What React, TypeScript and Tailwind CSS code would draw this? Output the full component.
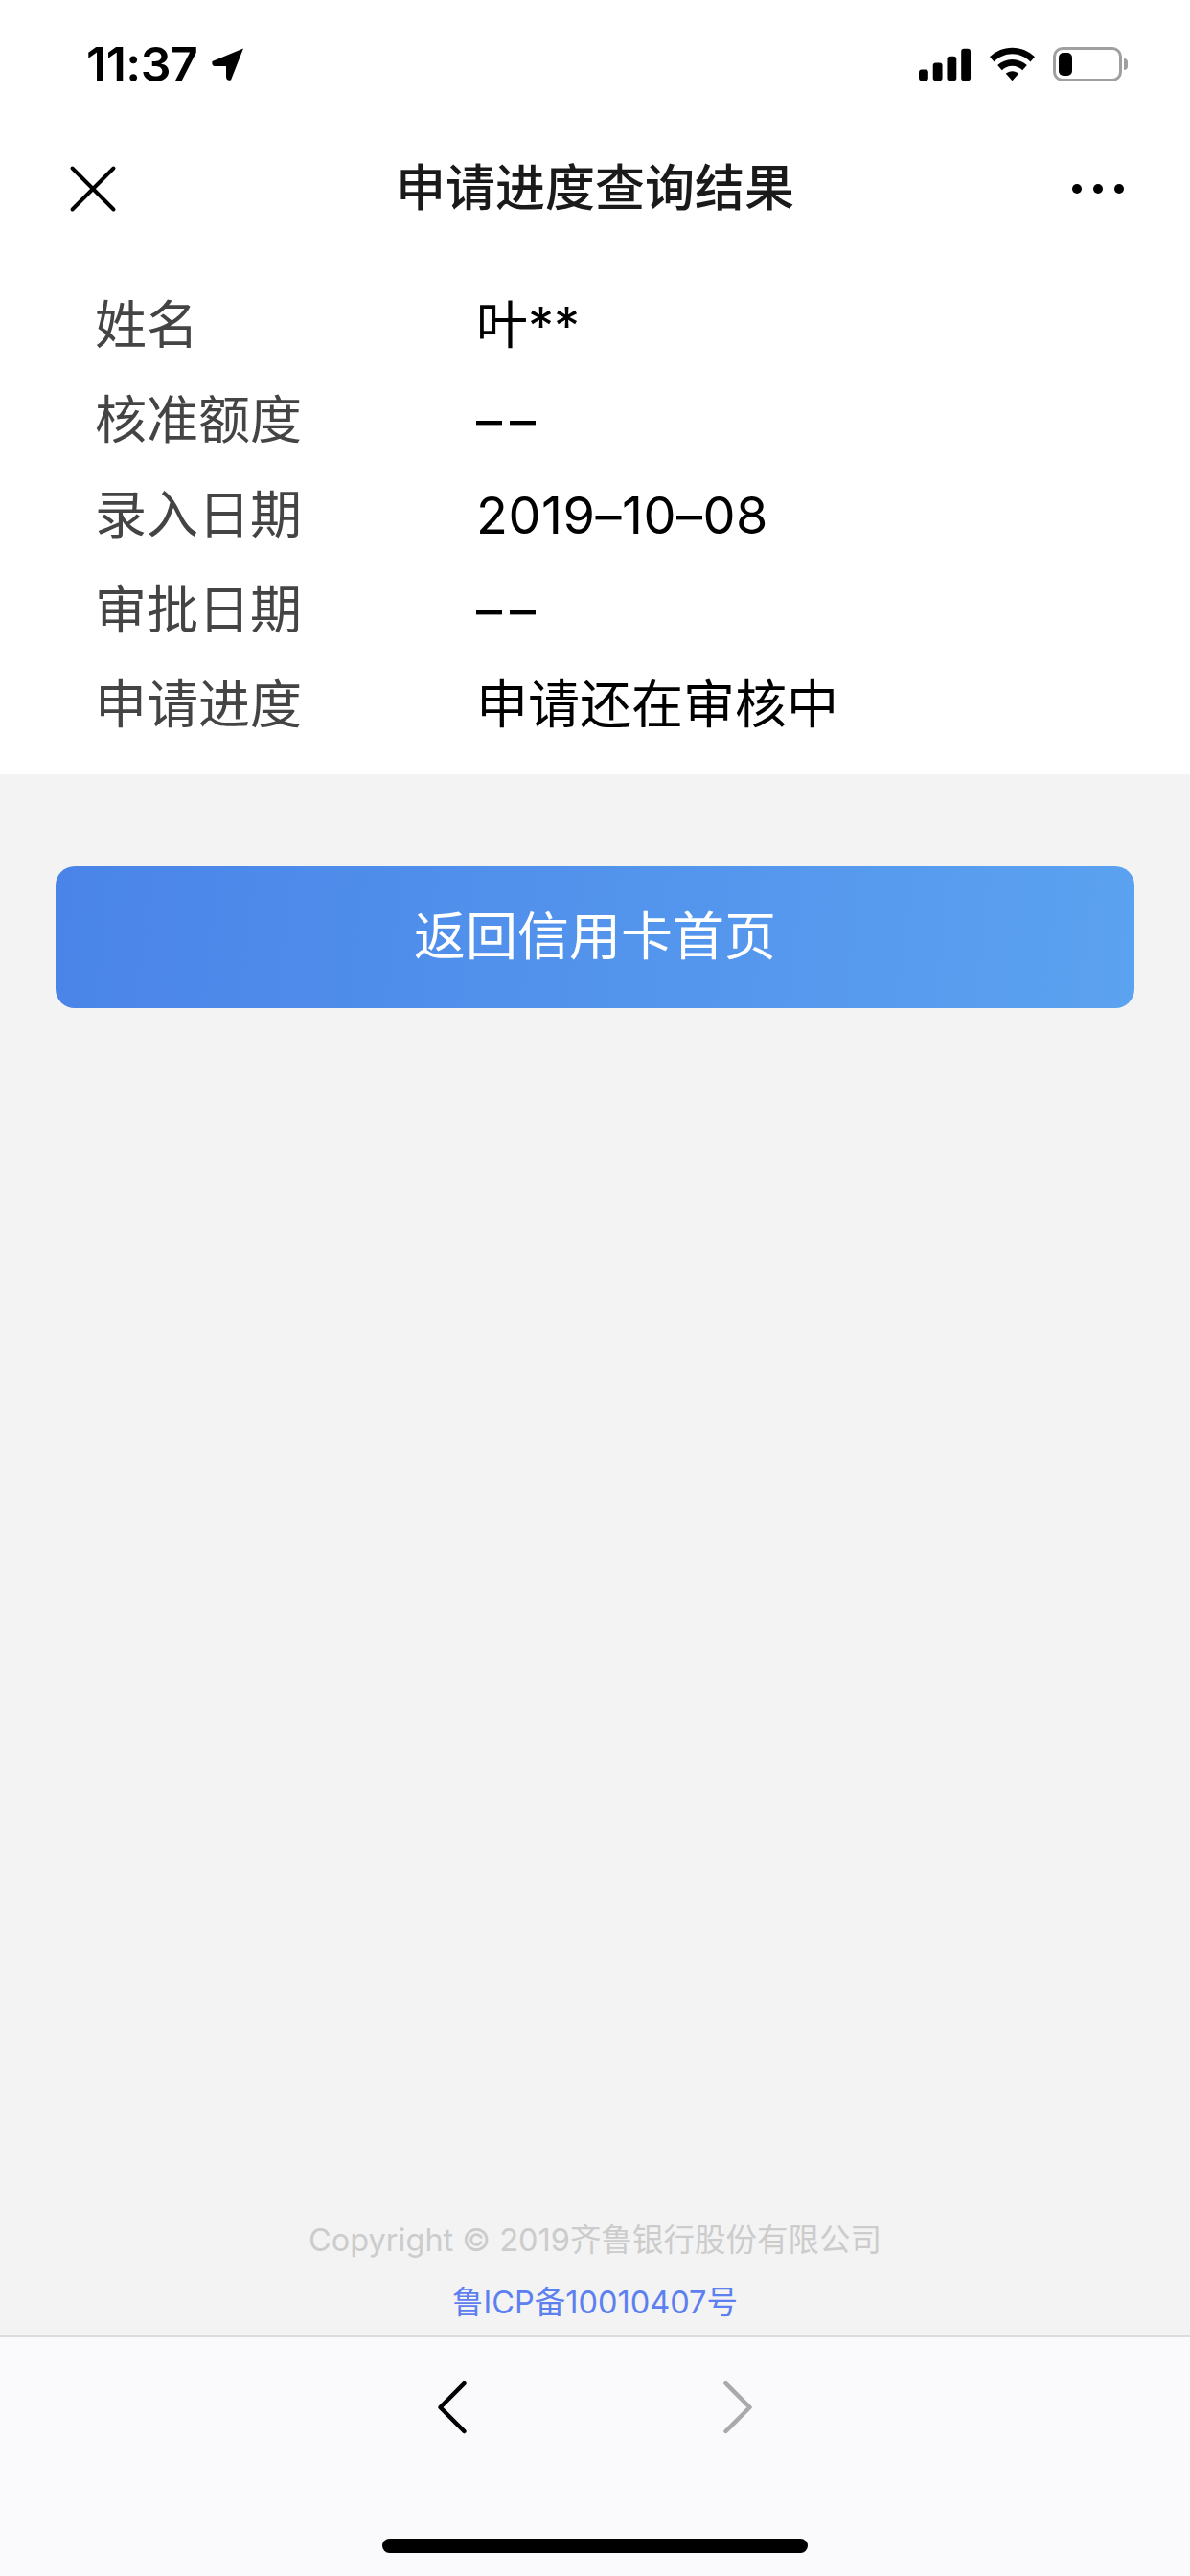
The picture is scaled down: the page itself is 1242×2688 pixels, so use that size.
import { ChevronLeft, ChevronRight, X } from "lucide-react";

const rows = [
  { label: "姓名", value: "叶**", valueClass: "" },
  { label: "核准额度", value: "––", valueClass: "tracking-[8px]" },
  { label: "录入日期", value: "2019–10–08", valueClass: "tracking-[0.5px]" },
  { label: "审批日期", value: "––", valueClass: "tracking-[8px]" },
  { label: "申请进度", value: "申请还在审核中", valueClass: "" },
];

const fontStack = "font-['Inter','Noto_Sans_CJK_SC',sans-serif]";

const StatusBar = () => (
  <div className="h-[132px] flex items-center justify-between pl-[90px] pr-[65px] pt-[2px]">
    <div className="flex items-center gap-[15px]">
      <span className="text-[50px] leading-none font-semibold tracking-[-0.5px] text-black">11:37</span>
      <svg width="34" height="34" viewBox="0 0 34 34">
        <path d="M33 0.5 L0.5 14 Q-0.5 19 4 19 L15 19 L15 30 Q15 34.5 20 33.5 Z" fill="#000" />
      </svg>
    </div>
    <div className="flex items-center gap-[19px]">
      <svg width="55" height="35" viewBox="0 0 56 34">
        <rect x="0" y="22" width="10" height="12" rx="3" fill="#000" />
        <rect x="15" y="15" width="10" height="19" rx="3" fill="#000" />
        <rect x="30" y="8" width="10" height="26" rx="3" fill="#000" />
        <rect x="45" y="0" width="10" height="34" rx="3" fill="#000" />
      </svg>
      <svg width="47" height="36" viewBox="0 0 46 34">
        <path d="M23 0 C14 0 6 3.5 0 9.5 L4.5 14.5 C9.5 9.5 16 6.5 23 6.5 C30 6.5 36.5 9.5 41.5 14.5 L46 9.5 C40 3.5 32 0 23 0 Z" fill="#000" />
        <path d="M23 12 C17 12 12 14.3 8 18 L12.5 23 C15.5 20.2 19 18.6 23 18.6 C27 18.6 30.5 20.2 33.5 23 L38 18 C34 14.3 29 12 23 12 Z" fill="#000" />
        <path d="M23 24 C20.5 24 18.3 25 16.5 26.5 L23 34 L29.5 26.5 C27.7 25 25.5 24 23 24 Z" fill="#000" />
      </svg>
      <div className="flex items-center gap-[2px]">
        <div className="w-[72px] h-[36px] rounded-[10px] border-[3px] border-[#a0a0a0] p-[3px] flex">
          <div className="w-[14px] rounded-[5px] bg-black" />
        </div>
        <div className="w-[4px] h-[12px] rounded-r-full bg-[#a0a0a0]" />
      </div>
    </div>
  </div>
);

const NavBar = () => (
  <div className="h-[130px] grid grid-cols-[1fr_auto_1fr] items-center px-[54px]">
    <X size={86} strokeWidth={1.1} color="#000" />
    <h1 className="text-[52px] font-medium text-[#1a1a1a] leading-none">申请进度查询结果</h1>
    <div className="flex items-center justify-end gap-[12px] mr-[15px]">
      <span className="w-[10px] h-[10px] rounded-full bg-black" />
      <span className="w-[10px] h-[10px] rounded-full bg-black" />
      <span className="w-[10px] h-[10px] rounded-full bg-black" />
    </div>
  </div>
);

export default function App() {
  return (
    <div className={`w-[1242px] h-[2688px] flex flex-col bg-[#f3f3f3] ${fontStack}`}>
      <div className="bg-white h-[808px] flex flex-col">
        <StatusBar />
        <NavBar />
        <div className="flex flex-col pt-[28px]">
          {rows.map((row) => (
            <div key={row.label} className="h-[99px] flex items-center pl-[99px] text-[54px] leading-none">
              <span className="w-[398px] text-[#444444]">{row.label}</span>
              <span className={`text-black ${row.valueClass}`}>{row.value}</span>
            </div>
          ))}
        </div>
      </div>

      <div className="px-[58px] pt-[96px]">
        <button className="w-full h-[148px] rounded-[20px] bg-[linear-gradient(97deg,#4a84e8,#5ba2f0)] text-white text-[54px] leading-none">
          返回信用卡首页
        </button>
      </div>

      <div className="flex-1 flex flex-col justify-end items-center pb-[17px] text-[32.5px] leading-none">
        <p className="text-[#cccccc] mb-[32px]">Copyright © 2019齐鲁银行股份有限公司</p>
        <p className="text-[#5d80f0]">鲁ICP备10010407号</p>
      </div>

      <div className="h-[252px] border-t-[3px] border-[#dcdcdc] bg-[#fafafc] flex flex-col items-center">
        <div className="flex items-center justify-center gap-[198px] pt-[23px]">
          <ChevronLeft size={100} strokeWidth={1.1} color="#000" />
          <ChevronRight size={100} strokeWidth={1.1} color="#aaaaaa" />
        </div>
        <div className="mt-auto mb-[24px] w-[444px] h-[15px] rounded-full bg-black" />
      </div>
    </div>
  );
}
